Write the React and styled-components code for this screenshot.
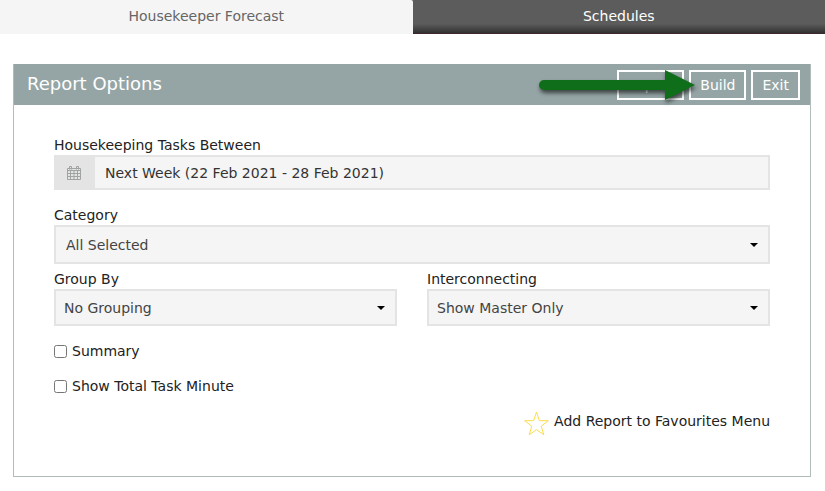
import styled, { createGlobalStyle } from "styled-components";

const GlobalStyle = createGlobalStyle`
  * {
    box-sizing: border-box;
  }

  body {
    margin: 0;
    background: #fff;
    color: #222;
    font-family: Verdana, "DejaVu Sans", sans-serif;
    font-size: 14px;
    line-height: 20px;
  }

  button,
  input,
  select {
    font: inherit;
  }
`;

const Tabs = styled.nav`
  display: grid;
  grid-template-columns: 1fr 1fr;
  background: linear-gradient(#5c5c5c 70%, #333 96%, #3d262c 96%);
`;

const Tab = styled.a`
  padding: 6px 0 8px;
  text-align: center;
  text-decoration: none;
  color: ${(props) => (props.$active ? "#666" : "#fff")};
  background: ${(props) => (props.$active ? "#f5f5f5" : "transparent")};
  border-top-right-radius: ${(props) => (props.$active ? "2px" : "0")};
`;

const Panel = styled.main`
  margin: 30px 14px 14px 13px;
  border: 1px solid #b0bcba;
`;

const PanelHeader = styled.header`
  display: flex;
  align-items: center;
  justify-content: space-between;
  margin: -1px 0 0;
  padding: 6px 10px 5px 13px;
  background: #95a5a5;
  color: #fff;
`;

const Title = styled.h1`
  margin: 0;
  padding-bottom: 2px;
  font-size: 18px;
  font-weight: 500;
`;

const Actions = styled.div`
  display: flex;
  gap: 5px;
`;

const ActionItem = styled.div`
  position: relative;
`;

const ActionButton = styled.button`
  display: block;
  height: 30px;
  padding: 0 9px;
  border: 2px solid #fff;
  background: transparent;
  color: #fff;
`;

const Pointer = styled.svg`
  position: absolute;
  top: 0;
  right: calc(100% - 6px);
  overflow: visible;
  pointer-events: none;
  filter: drop-shadow(1px 3px 2px rgba(0, 0, 0, 0.6));
`;

const Form = styled.form`
  padding: 30px 40px 40px;
`;

const Field = styled.div`
  margin-bottom: ${(props) => props.$gap || "0"};
`;

const Label = styled.label`
  display: block;
`;

const DateBox = styled.div`
  display: flex;
  height: 35px;
  border: 2px solid #e4e4e4;
  background: #f5f5f5;
`;

const DateIcon = styled.span`
  display: flex;
  align-items: center;
  width: 39px;
  padding-left: 11px;
  background: #e4e4e4;
  color: #a0a4a0;
`;

const DateInput = styled.input`
  flex: 1;
  min-width: 0;
  padding: 0 10px;
  border: 0;
  background: transparent;
  color: #333;
`;

const SelectBox = styled.div`
  position: relative;
`;

const StyledSelect = styled.select`
  display: block;
  appearance: none;
  width: 100%;
  height: ${(props) => (props.$large ? "39px" : "37px")};
  padding: 0 30px 0 ${(props) => (props.$large ? "10px" : "8px")};
  border: 2px solid #e4e4e4;
  border-radius: 0;
  background: #f5f5f5;
  color: #444;
`;

const Caret = styled.svg`
  position: absolute;
  top: calc(50% - 2px);
  right: 12px;
  pointer-events: none;
`;

const Columns = styled.div`
  display: grid;
  grid-template-columns: 1fr 1fr;
  gap: 30px;
  margin-bottom: 15px;
`;

const CheckRow = styled.label`
  display: flex;
  align-items: center;
  gap: 5px;
  margin-bottom: 15px;
`;

const Checkbox = styled.input`
  width: 13px;
  height: 13px;
  margin: 0;
`;

const FavouriteLink = styled.a`
  display: flex;
  align-items: flex-start;
  gap: 5px;
  width: fit-content;
  margin-left: auto;
  color: #222;
  text-decoration: none;
`;

function CalendarIcon() {
  return (
    <svg width="14" height="15" viewBox="0 0 14 15" fill="none" stroke="currentColor">
      <path d="M.5 3.5h13v11H.5zM.5 5.5h13M.5 8.5h13M.5 11.5h13M3.5 5.5v9M7 5.5v9M10.5 5.5v9" />
      <path d="M2.5 4.5v-3h2v3M9.5 4.5v-3h2v3" />
    </svg>
  );
}

function Select({ id, label, option, large }) {
  return (
    <Field $gap={large ? "5px" : "0"}>
      <Label htmlFor={id}>{label}</Label>
      <SelectBox>
        <StyledSelect id={id} $large={large}>
          <option>{option}</option>
        </StyledSelect>
        <Caret width="8" height="4" viewBox="0 0 8 4">
          <path d="M0 0h8L4 4z" fill="#000" />
        </Caret>
      </SelectBox>
    </Field>
  );
}

function App() {
  return (
    <>
      <GlobalStyle />
      <Tabs>
        <Tab href="#forecast" $active>
          Housekeeper Forecast
        </Tab>
        <Tab href="#schedules">Schedules</Tab>
      </Tabs>
      <Panel>
        <PanelHeader>
          <Title>Report Options</Title>
          <Actions>
            <ActionButton type="button">Export</ActionButton>
            <ActionItem>
              <ActionButton type="submit" form="report-options">
                Build
              </ActionButton>
              <Pointer width="156" height="30" viewBox="0 0 156 30">
                <path
                  d="M5 10H126V0L156 15L126 30V20H5A5 5 0 0 1 5 10z"
                  fill="#0f6e1a"
                />
              </Pointer>
            </ActionItem>
            <ActionButton type="button">Exit</ActionButton>
          </Actions>
        </PanelHeader>
        <Form id="report-options" onSubmit={(e) => e.preventDefault()}>
          <Field $gap="15px">
            <Label htmlFor="dates">Housekeeping Tasks Between</Label>
            <DateBox>
              <DateIcon>
                <CalendarIcon />
              </DateIcon>
              <DateInput
                id="dates"
                defaultValue="Next Week (22 Feb 2021 - 28 Feb 2021)"
              />
            </DateBox>
          </Field>
          <Select id="category" label="Category" option="All Selected" large />
          <Columns>
            <Select id="group" label="Group By" option="No Grouping" />
            <Select
              id="interconnecting"
              label="Interconnecting"
              option="Show Master Only"
            />
          </Columns>
          <CheckRow>
            <Checkbox type="checkbox" />
            Summary
          </CheckRow>
          <CheckRow>
            <Checkbox type="checkbox" />
            Show Total Task Minute
          </CheckRow>
          <FavouriteLink href="#favourites">
            <svg width="25" height="25" viewBox="0 0 25 25">
              <path
                d="M12.5 1L15.4 9.7H24.3L17.2 15.2L19.8 23.8L12.5 18.6L5.2 23.8L7.8 15.2L.7 9.7H9.6z"
                fill="none"
                stroke="#fbdc4b"
              />
            </svg>
            Add Report to Favourites Menu
          </FavouriteLink>
        </Form>
      </Panel>
    </>
  );
}

export default App;
